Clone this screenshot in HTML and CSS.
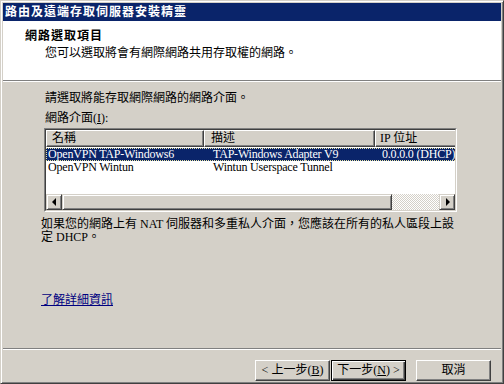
FILE: index.html
```html
<!DOCTYPE html>
<html lang="zh-Hant">
<head>
<meta charset="utf-8">
<title>路由及遠端存取伺服器安裝精靈</title>
<link rel="stylesheet" href="styles.css">
</head>
<body>
<div class="window">
  <div class="titlebar">路由及遠端存取伺服器安裝精靈</div>
  <div class="header">
    <div class="h-title">網路選取項目</div>
    <div class="h-sub">您可以選取將會有網際網路共用存取權的網路。</div>
  </div>
  <div class="content">
    <div class="prompt">請選取將能存取網際網路的網路介面。</div>
    <div class="label">網路介面(<u>I</u>):</div>
    <div class="listview">
      <div class="lv-inner">
        <div class="lv-head">
          <div class="hc c1">名稱</div>
          <div class="hc c2">描述</div>
          <div class="hc c3">IP 位址</div>
        </div>
        <div class="lv-rows">
          <div class="row sel"><span class="c1">OpenVPN TAP-Windows6</span><span class="c2">TAP-Windows Adapter V9</span><span class="c3">0.0.0.0 (DHCP)</span></div>
          <div class="row"><span class="c1">OpenVPN Wintun</span><span class="c2">Wintun Userspace Tunnel</span><span class="c3"></span></div>
        </div>
        <div class="hscroll">
          <div class="sb-btn left"></div>
          <div class="sb-thumb"></div>
          <div class="sb-track"></div>
          <div class="sb-btn right"></div>
        </div>
      </div>
    </div>
    <p class="note">如果您的網路上有 NAT 伺服器和多重私人介面，您應該在所有的私人區段上設<br>定 DHCP。</p>
    <a class="link" href="#">了解詳細資訊</a>
  </div>
  <div class="footer">
    <button class="btn">&lt; 上一步(<u>B</u>)</button>
    <button class="btn default">下一步(<u>N</u>) &gt;</button>
    <button class="btn cancel">取消</button>
  </div>
</div>
</body>
</html>
```
FILE: styles.css
```css
html, body {
  margin: 0;
  padding: 0;
  background: #d4d0c8;
}
body {
  font-family: "Liberation Serif", "Noto Sans CJK TC", serif;
  font-size: 12px;
  line-height: 13px;
  color: #000;
}
.window {
  width: 504px;
  height: 384px;
  box-sizing: border-box;
  border: 1px solid;
  border-color: #d4d0c8 #404040 #404040 #d4d0c8;
  box-shadow: inset 1px 1px #fff, inset -1px -1px #808080;
  padding: 2px;
  background: #d4d0c8;
  display: flex;
  flex-direction: column;
}
.titlebar {
  height: 18px;
  line-height: 18px;
  background: #0a246a;
  color: #fff;
  font-weight: bold;
  letter-spacing: 1px;
  padding-left: 2px;
  white-space: nowrap;
}
.header {
  height: 60px;
  box-sizing: border-box;
  background: #fff;
  border-bottom: 1px solid #808080;
  padding: 9px 0 0 22px;
}
.h-title {
  font-weight: bold;
  letter-spacing: 1px;
}
.h-sub {
  margin-top: 4px;
  padding-left: 20px;
}
.content {
  border-top: 1px solid #fff;
  border-bottom: 1px solid #808080;
  height: 256px;
  padding: 10px 0 0 38px;
  box-sizing: content-box;
  display: flex;
  flex-direction: column;
  align-items: flex-start;
}
.prompt {
  margin-left: 4px;
}
.label {
  margin-left: 4px;
  margin-top: 7px;
}
.listview {
  margin-top: 3px;
  margin-left: 3px;
  width: 413px;
  height: 84px;
  box-sizing: border-box;
  border: 1px solid;
  border-color: #808080 #fff #fff #808080;
  background: #fff;
}
.lv-inner {
  height: 100%;
  box-sizing: border-box;
  border: 1px solid;
  border-color: #404040 #d4d0c8 #d4d0c8 #404040;
  display: flex;
  flex-direction: column;
  overflow: hidden;
}
.lv-head {
  display: flex;
  height: 17px;
  flex: none;
}
.hc {
  flex: none;
  box-sizing: border-box;
  height: 17px;
  background: #d4d0c8;
  border: 1px solid;
  border-color: #fff #404040 #404040 #fff;
  box-shadow: inset -1px -1px #808080;
  padding: 1px 0 0 5px;
  white-space: nowrap;
}
.c1 { width: 158px; }
.c2 { width: 171px; }
.c3 { width: 200px; }
.hc.c2 { padding-left: 6px; }
.hc.c3 { padding-left: 4px; }
.lv-rows {
  flex: 1;
  padding-top: 1px;
}
.row {
  display: flex;
  height: 13px;
  line-height: 13px;
  white-space: nowrap;
  width: 529px;
  box-sizing: border-box;
}
.row span {
  flex: none;
  box-sizing: border-box;
  overflow: hidden;
  letter-spacing: -0.2px;
}
.row .c1 { padding-left: 2px; }
.row .c2 { padding-left: 9px; }
.row .c3 { padding-left: 7px; }
.row.sel {
  background: #0a246a;
  color: #fff;
  outline: 1px dotted #e8e4a0;
  outline-offset: -1px;
}
.hscroll {
  flex: none;
  height: 16px;
  display: flex;
}
.sb-btn {
  flex: none;
  width: 16px;
  height: 16px;
  box-sizing: border-box;
  background: #d4d0c8;
  border: 1px solid;
  border-color: #d4d0c8 #404040 #404040 #d4d0c8;
  box-shadow: inset 1px 1px #fff, inset -1px -1px #808080;
  display: flex;
  align-items: center;
  justify-content: center;
}
.sb-btn::before {
  content: "";
  width: 0;
  height: 0;
  border-top: 4px solid transparent;
  border-bottom: 4px solid transparent;
}
.sb-btn.left::before {
  border-right: 4px solid #000;
  margin-left: -1px;
}
.sb-btn.right::before {
  border-left: 4px solid #000;
  margin-left: 1px;
}
.sb-thumb {
  flex: none;
  width: 330px;
  height: 16px;
  box-sizing: border-box;
  background: #d4d0c8;
  border: 1px solid;
  border-color: #d4d0c8 #404040 #404040 #d4d0c8;
  box-shadow: inset 1px 1px #fff, inset -1px -1px #808080;
}
.sb-track {
  flex: 1;
  height: 16px;
  background: repeating-conic-gradient(#fff 0 25%, #d4d0c8 0 50%) 0 0 / 2px 2px;
}
.note {
  margin: 6px 0 0 0;
  line-height: 13px;
}
.link {
  margin-top: 50px;
  color: #000080;
  text-decoration: underline;
}
.footer {
  flex: 1;
  border-top: 1px solid #fff;
  display: flex;
  align-items: flex-start;
  justify-content: flex-end;
  padding: 10px 10px 0 0;
}
.btn {
  width: 75px;
  height: 21px;
  box-sizing: border-box;
  margin: 0;
  padding: 0;
  font-family: "Liberation Serif", "Noto Sans CJK TC", serif;
  font-size: 12px;
  line-height: 13px;
  color: #000;
  background: #d4d0c8;
  border: 1px solid;
  border-color: #fff #404040 #404040 #fff;
  box-shadow: inset -1px -1px #808080;
  white-space: nowrap;
}
.btn.default {
  margin-left: 1px;
  border-color: #000;
  box-shadow: inset 1px 1px #fff, inset -1px -1px #404040, inset -2px -2px #808080;
}
.btn.cancel {
  margin-left: 10px;
}
```
